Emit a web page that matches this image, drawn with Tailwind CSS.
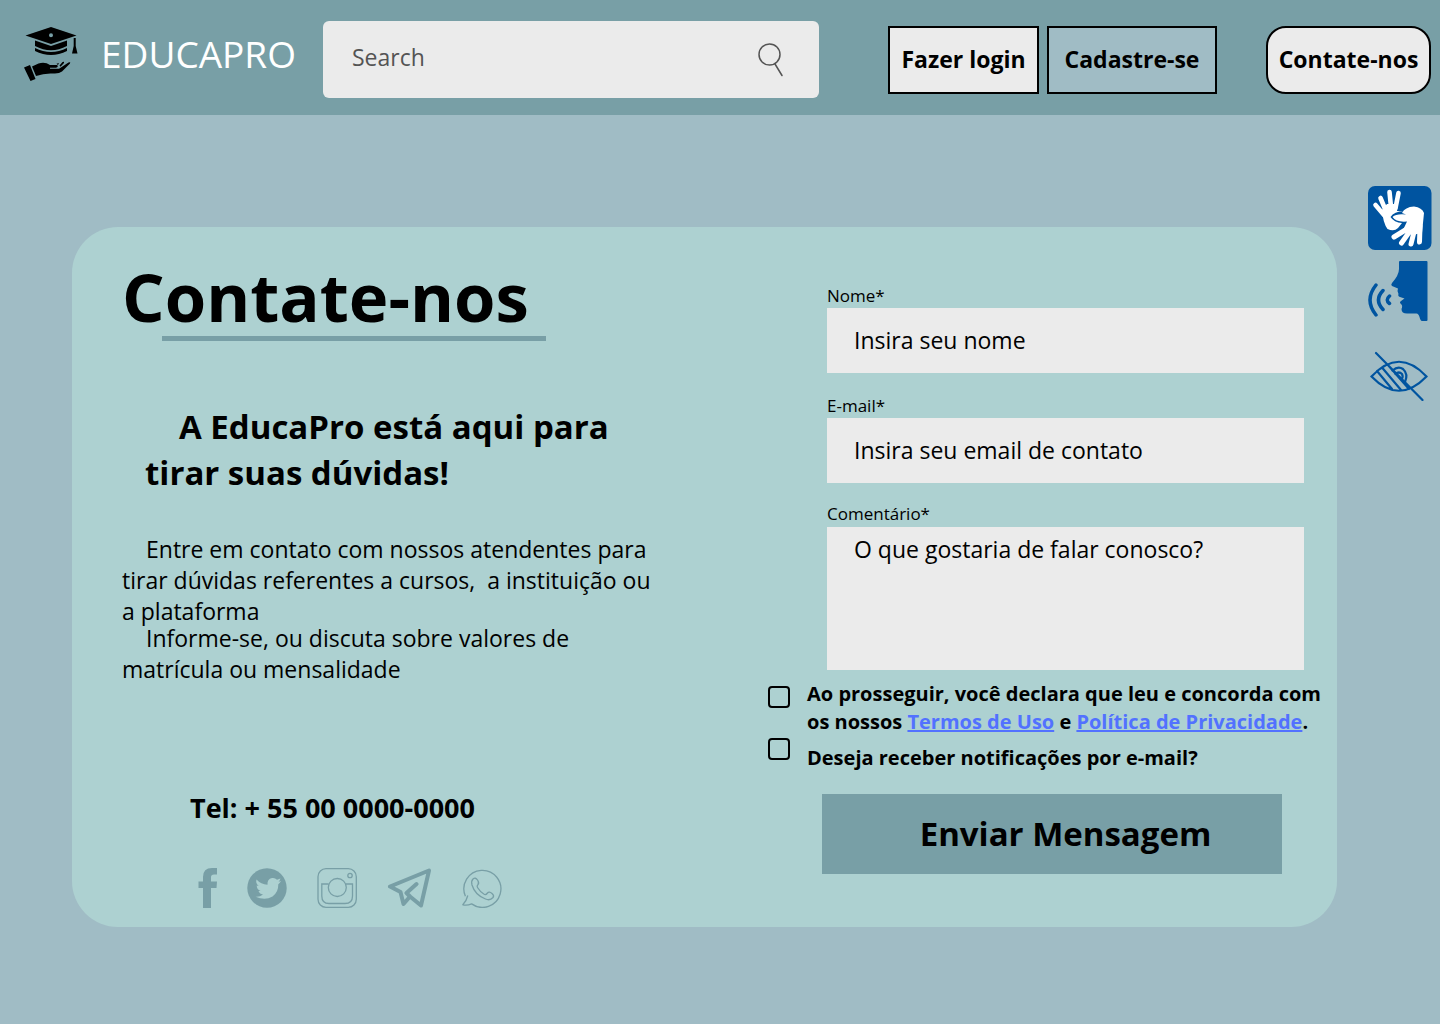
<!DOCTYPE html>
<html lang="pt-BR">
<head>
<meta charset="utf-8">
<meta name="viewport" content="width=device-width, initial-scale=1">
<title>EducaPro - Contate-nos</title>
<script src="https://cdn.jsdelivr.net/npm/@tailwindcss/browser@4"></script>
</head>
<body class="min-h-screen bg-[#a0bcc5] font-['Open_Sans',sans-serif] text-black">
<header class="flex h-[115px] items-center bg-[#789fa6] pr-[9px] pl-6">
  <a href="#" class="flex shrink-0 items-center gap-[23px] pb-2 text-[37px] leading-[52px] text-white">
    <svg class="h-[54px] w-[54px] text-black" viewBox="0 0 54 54" fill="currentColor" aria-hidden="true">
      <path fill-rule="evenodd" d="M27 0 L52.500 8.500 L27 17 L1.500 8.500 Z M27 6.300 a2 2 0 1 0 0 4 a2 2 0 1 0 0-4Z"/>
      <path d="M11 13.500 L27 19 L43 13.500 V19 Q27 27.500 11 19Z M11 21 Q27 29 43 21 V24 Q27 32 11 24Z"/>
      <path d="M49.700 11 H51.700 V19 L53.500 26.500 H48 L49.700 19Z"/>
      <path d="M0 40.500 L6 38 L11.500 52 L6.500 54Z M8 39.500 L14.500 36.500 Q21 34.500 26 38 H33 Q35 39.500 32 40.800 H26 V41.800 H35 L44.500 35.500 Q47 34.500 46 36.500 L38 44.500 Q35 47 29 46.500 Q20 46 12 49Z M32.500 36.800 L35 36 L34 38Z M35.500 38.500 L38.500 35 Q40.500 34 40 36 L36.500 39.800Z"/>
    </svg>
    EDUCAPRO
  </a>
  <form role="search" class="mt-1 ml-[27px] flex h-[77px] min-w-0 flex-1 items-center rounded-md bg-[#ebebeb] pr-9 pl-[29px]">
    <input type="search" aria-label="Search" placeholder="Search" class="min-w-0 flex-1 bg-transparent pb-1.5 text-[23px] leading-8 outline-none placeholder:text-[#545454]">
    <button type="submit" aria-label="Buscar" class="shrink-0">
      <svg class="h-[34px] w-[26px]" viewBox="0 0 26 34" fill="none" stroke="#545454" stroke-width="1.500" stroke-linecap="round"><circle cx="12.500" cy="11.500" r="10.500"/><path d="M18 21 L25 32.500"/></svg>
    </button>
  </form>
  <nav class="ml-[69px] flex shrink-0 items-center pt-1 text-[23px] font-bold">
    <button class="h-[68px] w-[151px] border-2 border-black bg-[#ebebeb]">Fazer login</button>
    <button class="ml-2 h-[68px] w-[170px] border-2 border-black bg-[#a0bcc5]">Cadastre-se</button>
    <button class="ml-[49px] h-[68px] w-[165px] rounded-[20px] border-2 border-black bg-[#ebebeb]">Contate-nos</button>
  </nav>
</header>

<div class="flex items-start pl-[72px]">
  <main class="mt-28 mb-24 grid min-w-0 flex-1 grid-cols-[minmax(0,1fr)_569px] rounded-[46px] bg-[#add1d1] pb-[19px]">
    <section class="pt-[29px] pl-[50px]">
      <h1 class="text-[67px] leading-[80px] font-bold">Contate-nos</h1>
      <div class="ml-10 h-[5px] w-96 bg-[#789fa6]"></div>
      <h2 class="mt-[63px] ml-[23px] max-w-[500px] indent-[34px] text-[33px] leading-[46px] font-bold">A EducaPro está aqui para tirar suas dúvidas!</h2>
      <div class="mt-[38px] max-w-[536px] indent-6 text-[23px] leading-[31px]">
        <p>Entre em contato com nossos atendentes para tirar dúvidas referentes a cursos,&nbsp; a instituição ou a&nbsp;plataforma</p>
        <p class="-mt-1">Informe-se, ou discuta sobre valores de matrícula ou mensalidade</p>
      </div>
      <p class="mt-[105px] ml-[68px] text-[27px] leading-9 font-bold">Tel: + 55 00 0000-0000</p>
      <div class="mt-[42px] ml-[76px] flex items-center text-[#789fa6]">
        <a href="#" aria-label="Facebook"><svg class="h-10 w-5" viewBox="0 0 20 40" fill="currentColor"><path d="M5 40 V20 H.5 V13.500 H5 V9 Q5 0 14 0 H19 V6.500 H16 Q13 6.500 13 9 V13.500 H19 L18.500 20 H13 V40Z"/></svg></a>
        <a href="#" aria-label="Twitter" class="ml-[29px]"><svg class="h-10 w-10" viewBox="0 0 40 40"><circle cx="20" cy="20" r="19.700" fill="currentColor"/><path fill="#add1d1" d="M9.500 11.500 Q14 16.500 20.500 16.800 Q20 11 25 10 Q28 9.500 30 11.700 L33.500 10.500 Q33 12.500 31.500 13.700 L34 13 Q33 15 31.300 16.200 Q31.500 24 25.500 28.500 Q18 33 8.500 28.700 Q13 29 16 26.500 Q12.500 26 11.500 23 H13.500 Q9.800 21.500 9.700 17.500 L11.700 18 Q8.300 15.300 9.500 11.500Z"/></svg></a>
        <a href="#" aria-label="Instagram" class="ml-[30px]"><svg class="h-10 w-10" viewBox="0 0 40 40" fill="none" stroke="currentColor" stroke-width="1.300"><rect x="1" y=".7" width="38.300" height="38.600" rx="8"/><circle cx="20.300" cy="19.500" r="9"/><circle cx="33" cy="7.500" r="2.200"/><path d="M11.500 16 H4.800 V28 Q4.800 35.500 12 35.500 H28 Q35.500 35.500 35.500 28 V16 H29"/></svg></a>
        <a href="#" aria-label="Telegram" class="ml-[30px]"><svg class="h-10 w-11" viewBox="0 0 44 40" fill="none" stroke="currentColor" stroke-width="4" stroke-linejoin="round" stroke-linecap="round"><path d="M3 18.500 L42 2.500 L34 37.500 L23 28.500 L16.500 36 L13.500 24Z M29.500 16 L19.500 25 L23 28.500"/></svg></a>
        <a href="#" aria-label="WhatsApp" class="ml-[31px]"><svg class="h-10 w-10" viewBox="0 0 40 40" fill="none" stroke="currentColor" stroke-width="1.300" stroke-linejoin="round"><path d="M3.400 28.200 A18.500 18.500 0 1 1 9.600 35.900 Q5 37.800 .8 36.800 Q4.500 33 5.800 27.500"/><path d="M11 11 Q13.500 9 15.500 12 Q17.500 15 16 16.500 Q14.500 18 15.500 19.500 Q18.500 24.500 22.500 26.500 Q24 27 25.500 25 Q27 23 30 25.500 Q32.500 27.500 31 29.500 Q28 33 23.500 31 Q13 27 10 17 Q9 13 11 11Z"/></svg></a>
      </div>
    </section>

    <form class="pt-14">
      <div class="flex flex-col pr-[33px] pl-[59px]">
        <label for="nome" class="text-[17px] leading-[25px]">Nome*</label>
        <input id="nome" type="text" placeholder="Insira seu nome" class="h-[65px] bg-[#ebebeb] px-[27px] pb-0.5 text-[23px] outline-none placeholder:text-black">
        <label for="email" class="mt-5 text-[17px] leading-[25px]">E-mail*</label>
        <input id="email" type="email" placeholder="Insira seu email de contato" class="h-[65px] bg-[#ebebeb] px-[27px] pb-0.5 text-[23px] outline-none placeholder:text-black">
        <label for="comentario" class="mt-[18px] pb-px text-[17px] leading-[25px]">Comentário*</label>
        <textarea id="comentario" placeholder="O que gostaria de falar conosco?" class="h-[143px] resize-none bg-[#ebebeb] px-[27px] py-[7px] text-[23px] leading-[31px] outline-none placeholder:text-black"></textarea>
      </div>
      <div class="mt-2.5 flex items-start gap-[17px] text-[20px] leading-7 font-bold">
        <input id="termos" type="checkbox" class="mt-1.5 size-[22px] shrink-0 appearance-none rounded-[4px] border-2 border-black checked:bg-[#789fa6]">
        <label for="termos">Ao prosseguir, você declara que leu e concorda com os nossos <a href="#" class="text-[#5271ff] underline">Termos de Uso</a> e <a href="#" class="text-[#5271ff] underline">Política de Privacidade</a>.</label>
      </div>
      <div class="mt-0.5 flex items-start gap-[17px] text-[20px] leading-7 font-bold">
        <input id="avisos" type="checkbox" class="size-[22px] shrink-0 appearance-none rounded-[4px] border-2 border-black checked:bg-[#789fa6]">
        <label for="avisos" class="pt-1.5">Deseja receber notificações por e-mail?</label>
      </div>
      <button type="submit" class="mt-[22px] ml-[54px] h-20 w-[460px] bg-[#789fa6] pl-[27px] text-[33px] font-bold">Enviar Mensagem</button>
    </form>
  </main>

  <aside aria-label="Acessibilidade" class="flex w-[103px] shrink-0 flex-col items-start pt-[71px] pl-[31px] text-[#0054a0]">
    <button aria-label="Libras"><svg class="size-16" viewBox="0 0 64 64"><rect width="63.500" height="64" rx="7" fill="currentColor"/>
      <g fill="none" stroke="#fff" stroke-width="4.600" stroke-linecap="round"><path d="M16 29 L7.500 19 M17.500 24 L12.500 12 M23 21 L21.500 6 M27.500 22 L30.500 7"/><path stroke-width="5" d="M39 43 L26 51 M42 45 L33.500 57 M46 46 L43 58 M52 40 L51.500 56"/></g>
      <path fill="#fff" d="M14 24 L19 18 L30 18 L29 25 L36 25 Q26 25.500 22.500 31 Q26 36.500 34 37 L30 42 Q26 46 19.500 43 Q15 37 14 24Z"/><path fill="#fff" d="M34 27 Q37 21 46 20.500 Q54 21.500 56 27 L54 47 L44 49 L35 44 L39 35.500 Q28 36.500 24.500 31 Q28 27.500 38 28.500Z"/></svg></button>
    <button aria-label="Leitura em voz alta" class="mt-[11px]"><svg class="h-[60px] w-[60px]" viewBox="0 0 60 60"><path fill="currentColor" d="M31 1 Q31 0 32 0 H58.500 Q59.500 0 59.500 1 V59 Q59.500 60 58.500 60 H54 Q52.500 60 51.500 56 Q50.500 52.500 48.500 52.500 H39 Q33.500 52.500 33.500 48 Q35 44.500 33 43 Q31 41.500 33 40 L36.500 37.500 L32 36 Q29.500 35 30.500 33 L29.500 30 L30 27.500 L24 25 Q22.500 24 24 22 Q31 14 31 8Z"/><g fill="none" stroke="currentColor" stroke-width="3.500" stroke-linecap="round"><path d="M8 24 Q-4 39 8 54 M15 29.500 Q6 39 15 48.500 M21.500 35 Q17 39 21.500 42.500"/></g></svg></button>
    <button aria-label="Alto contraste" class="mt-[30px] ml-0.5"><svg class="h-[50px] w-[58px]" viewBox="0 0 58 50" fill="none" stroke="currentColor" stroke-width="2.200" stroke-linecap="round"><path d="M1.500 25.500 Q29-4 56.500 25.500 Q29 54 1.500 25.500Z M6 2 L52.500 49 M7 20 L22 38 M12 16.500 L31 39 M17.500 13.500 L39 38"/><path d="M22.500 19.500 Q28 14.500 33 18 Q38.500 23 35 31 M25.500 23 Q29 20 32 23 Q33.500 26 31.500 28"/></svg></button>
  </aside>
</div>
</body>
</html>
